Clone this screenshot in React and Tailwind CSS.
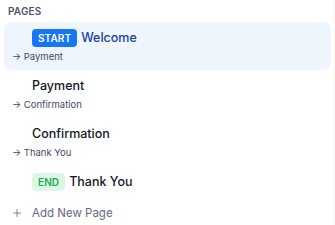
import { Plus } from 'lucide-react';

const PAGES = [
  { name: 'Welcome', next: 'Payment', badge: 'start', active: true },
  { name: 'Payment', next: 'Confirmation' },
  { name: 'Confirmation', next: 'Thank You' },
  { name: 'Thank You', badge: 'end' },
];

const BADGES = {
  start: 'bg-[#1677f2] text-white',
  end: 'bg-[#dcf7e6] text-[#1fa855]',
};

const App = () => (
  <div className="w-[335px] h-[225px] bg-white font-['Inter',sans-serif] pt-[4px] border-r border-[#f6f6ee] box-border overflow-hidden">
    <div className="px-[8px] text-[10px] font-semibold tracking-[0.02em] text-[#4a5568] leading-[14px]">PAGES</div>

    <div className="mt-[4px] pl-[4px] pr-[3px]">
      {PAGES.map(p => <PageRow key={p.name} page={p} />)}
    </div>

    <div className="flex items-center gap-[9px] pl-[11px] mt-[7px] text-[#5f6b7e]">
      <Plus size={12} strokeWidth={1.6} />
      <span className="text-[11.5px] leading-[16px]">Add New Page</span>
    </div>
  </div>
);

const PageRow = ({ page }) => (
  <div className={`rounded-[8px] pt-[7px] ${page.next ? 'h-[48px]' : 'pb-[7px]'} ${page.active ? 'bg-[#eef5fd]' : ''}`}>
    <div className="flex items-center gap-[4px] pl-[28px] h-[18px]">
      {page.badge && (
        <span className={`px-[6px] h-[18px] flex items-center rounded-[4px] text-[10px] font-semibold tracking-[0.01em] ${BADGES[page.badge]}`}>
          {page.badge.toUpperCase()}
        </span>
      )}
      <span className={`text-[12.5px] font-medium leading-[18px] ${page.active ? 'text-[#1c3f9e]' : 'text-[#111827]'}`}>{page.name}</span>
    </div>
    {page.next && (
      <div className="pl-[8px] mt-[3px] text-[9.5px] leading-[14px] text-[#3f4a63]">→ {page.next}</div>
    )}
  </div>
);

export default App;
